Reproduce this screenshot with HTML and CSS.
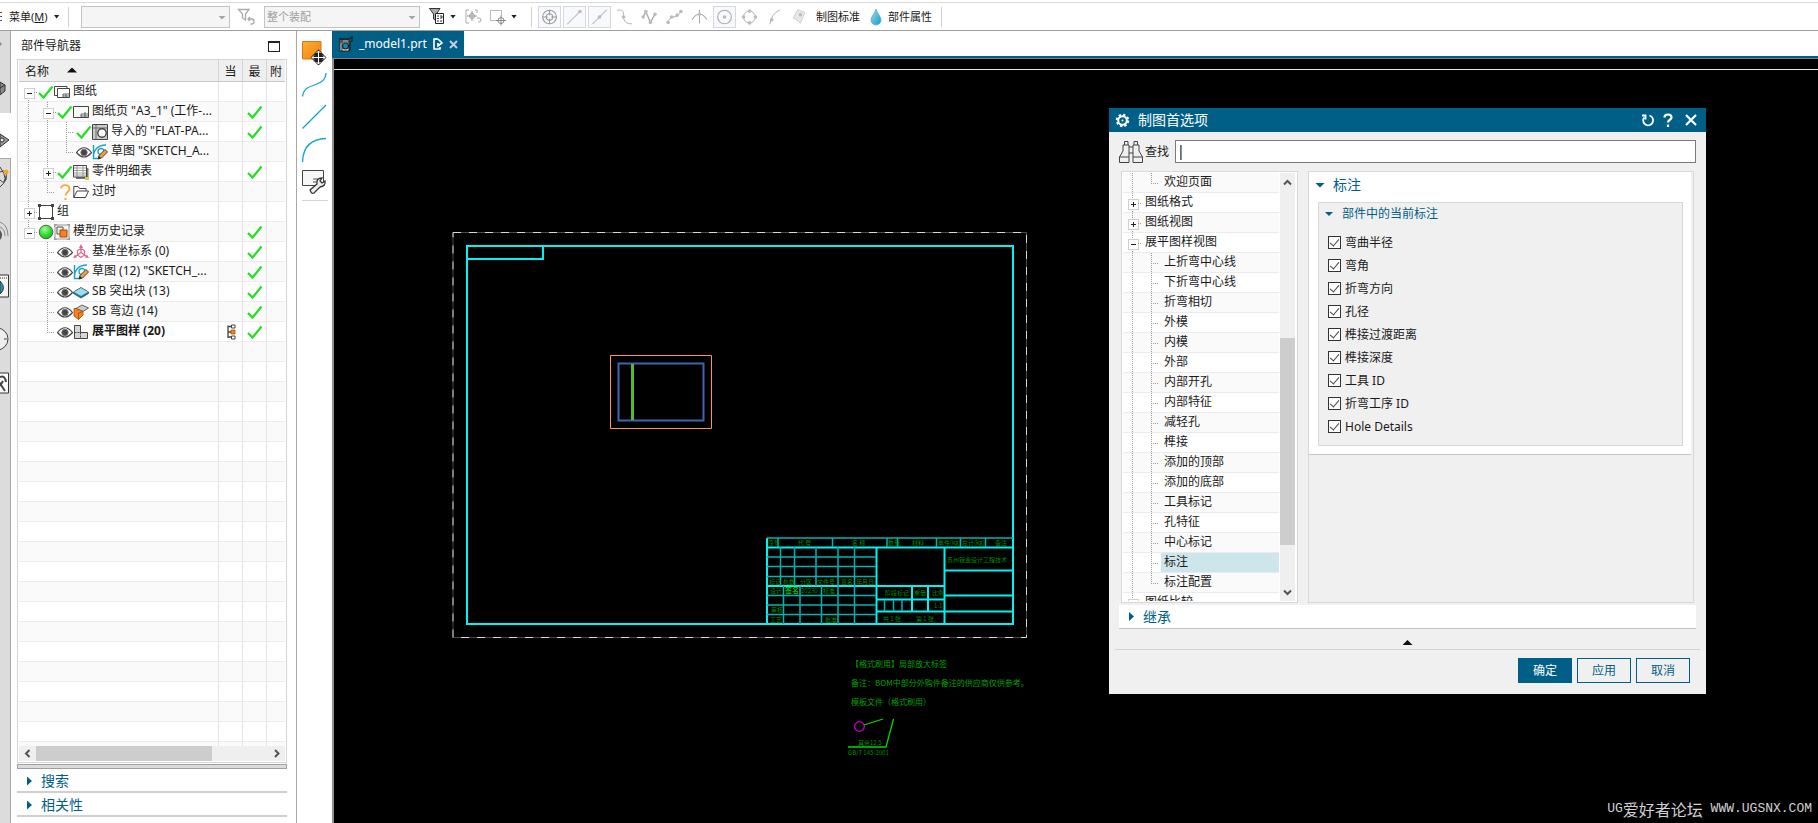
FILE: index.html
```html
<!DOCTYPE html>
<html lang="zh-CN">
<head>
<meta charset="utf-8">
<title>_model1.prt</title>
<link rel="stylesheet" href="styles.css">
</head>
<body>
<svg class="defs" aria-hidden="true">
  <defs>
    <linearGradient id="g-orange" x1="0" y1="0" x2="1" y2="1"><stop offset="0" stop-color="#fbb034"/><stop offset="1" stop-color="#f08010"/></linearGradient>
    <linearGradient id="g-drop" x1="0" y1="0" x2="1" y2="1"><stop offset="0" stop-color="#a6dcec"/><stop offset="1" stop-color="#0d9cc4"/></linearGradient>
    <radialGradient id="g-ball" cx=".4" cy=".3" r=".7"><stop offset="0" stop-color="#a8f5a0"/><stop offset=".6" stop-color="#2fe02f"/><stop offset="1" stop-color="#1fb81f"/></radialGradient>
  </defs>
  <symbol id="check" viewBox="0 0 16 16"><path d="M1 9 5.500 13.500 14.500 2.500" fill="none" stroke="#22e022" stroke-width="2.200"/></symbol>
  <symbol id="eye" viewBox="0 0 16 16"><path d="M.5 8.500Q8-1 15.500 8.500Q8 17.500 .5 8.500Z" fill="#fff" stroke="#444" stroke-width="1.200"/><circle cx="8" cy="8.500" r="3.200" fill="#444" stroke="#777"/></symbol>
  <symbol id="sheets" viewBox="0 0 16 16"><path d="M3 11.500H.5V2.500H13V4" fill="none" stroke="#444"/><path d="M3.500 4.500H15.500V13.500H3.500Z" fill="#fff" stroke="#444"/><path d="M9 13V10H15M9 12H15M12 10V13" fill="none" stroke="#444" stroke-width=".8"/></symbol>
  <symbol id="sheet" viewBox="0 0 16 16"><path d="M.5 2.500H15.500V13.500H.5Z" fill="#f8f8f8" stroke="#444"/><path d="M8 13V10H15M8 12H15M12 8V13" fill="none" stroke="#444" stroke-width=".8"/></symbol>
  <symbol id="import" viewBox="0 0 16 16"><path d="M.5.5H15.500V15.500H.5Z" fill="#ccc" stroke="#444"/><path d="M4 1V15M1 4H15" stroke="#666"/><circle cx="10" cy="9" r="4.200" fill="#fff" stroke="#444" stroke-width="1.400"/></symbol>
  <symbol id="sketch" viewBox="0 0 16 16"><path d="M1.500 1V14.500H6M1.500 14C1 6 6 1 14 1M6 8a3 3 0 1 0 6-1A3 3 0 0 0 6 8" fill="none" stroke="#18a0cc" stroke-width="1.400"/><path d="M6 15 7 11.500 13 5.500 15.500 8 9.500 14Z" fill="#f3a03c" stroke="#333" stroke-width=".9"/><path d="M6 15 7 12 9 14Z" fill="#222"/></symbol>
  <symbol id="list" viewBox="0 0 16 16"><path d="M3 4H15.500V15H3Z" fill="#777"/><path d="M.5 1.500H13.500V13H.5Z" fill="#fff" stroke="#444"/><path d="M1 4H13M1 6.500H13M1 9H13M1 11H13M4 2V13M10 2V13" stroke="#888" stroke-width=".8"/><path d="M12 13H16V16H12Z" fill="#d8c64a"/></symbol>
  <symbol id="quest" viewBox="0 0 16 16"><path d="M4 4.500C4 0 12.500 0 12.500 5C12.500 8 8.500 8 8.500 11.500" fill="none" stroke="#f9a83d" stroke-width="1.800"/><path d="M7.500 14H9.500V16H7.500Z" fill="#f9a83d"/></symbol>
  <symbol id="folder" viewBox="0 0 16 16"><path d="M.8 13.500V2.500H5L6.500 4.500H13V7M.8 13.500 4 7H15.500L12.500 13.500Z" fill="#fff" stroke="#444"/></symbol>
  <symbol id="group" viewBox="0 0 16 16"><path d="M1.500 1.500H14.500V14.500H1.500Z" fill="none" stroke="#444"/><path d="M0 0H3V3H0ZM13 0H16V3H13ZM0 13H3V16H0ZM13 13H16V16H13Z" fill="#444"/></symbol>
  <symbol id="ball" viewBox="0 0 16 16"><circle cx="8" cy="8" r="6.800" fill="url(#g-ball)" stroke="#444" stroke-width=".8"/></symbol>
  <symbol id="history" viewBox="0 0 16 16"><path d="M1 1H15V15H1Z" fill="#f4f4f4" stroke="#999"/><path d="M0 3V0H3M13 0H16V3M0 13V16H3M13 16H16V13" fill="none" stroke="#777"/><path d="M3 3H9V10H3Z" fill="#eee" stroke="#555"/><path d="M6 6H13V13H6Z" fill="#f58220" stroke="#a34b00"/></symbol>
  <symbol id="csys" viewBox="0 0 16 16"><path d="M8 2V8.500L2.500 12.500M8 8.500 13.500 12.500M4.500 6.500V11L8 13.500 11.500 11V6.500L8 4.500Z" fill="none" stroke="#d86a92" stroke-width="1.200"/><path d="M8 0 10 4H6ZM0 14 2 10.500 4 13.500ZM16 14 14 10.500 12 13.500Z" fill="#d86a92"/></symbol>
  <symbol id="tab3d" viewBox="0 0 16 16"><path d="M.5 8 8 3.500 15.500 8V9.500L8 14 .5 9.500Z" fill="#0b7fa5" stroke="#444" stroke-width=".8"/><path d="M1 8 8 4 15 8 8 12Z" fill="#9fdcec"/></symbol>
  <symbol id="flange" viewBox="0 0 16 16"><path d="M3 4.500 9 1 15.500 4 10 7.500Z" fill="#ccc" stroke="#444" stroke-width=".8"/><path d="M1 4.500 3 4.500 10 7.500V11L5.500 15.500 1 12Z" fill="#f58220" stroke="#a34b00" stroke-width=".8"/><path d="M5.500 15.500V9L10 7.500" fill="none" stroke="#a34b00" stroke-width=".8"/></symbol>
  <symbol id="flat" viewBox="0 0 16 16"><path d="M1.500 1.500H7.500V8.500H14.500V14.500H1.500Z" fill="#d6d6d6" stroke="#444"/><path d="M7.500 8.500V14.500M1.500 8.500H7.500" stroke="#444" stroke-dasharray="2 1"/></symbol>
  <symbol id="link" viewBox="0 0 10 16"><path d="M2 1.500V14M2 2.500H5M2 8H5M2 13H5" fill="none" stroke="#444" stroke-width="1.300"/><path d="M5.500 1H9V4H5.500ZM5.500 12H9V15H5.500Z" fill="#fff" stroke="#444"/><path d="M5 6H9V10H5Z" fill="#f58220" stroke="#a34b00" stroke-width=".7"/></symbol>
</svg>

<header class="menubar">
  <button class="menu-btn"><svg width="3" height="12" viewBox="0 0 3 12"><path d="M0 1.500H2M0 5.500H2M0 9.500H2" stroke="#555"/></svg><span>菜单(<u>M</u>)</span><i class="caret"></i></button>
  <i class="sep"></i>
  <span class="combo combo-a"><select disabled aria-label="类型过滤器"><option></option></select><i class="caret dim"></i></span>
  <button class="tool" aria-label="重置过滤器"><svg width="20" height="20" viewBox="0 0 20 20"><path d="M1.500 2.500H12L8.500 7V13L5.500 11V7ZM11 12H14.500A2.300 2.300 0 0 1 14.500 17H13.500M13 10 11 12 13 14" fill="none" stroke="#aaa" stroke-width="1.300"/></svg></button>
  <span class="combo combo-b"><select disabled aria-label="选择范围"><option>整个装配</option></select><i class="caret dim"></i></span>
  <button class="tool" aria-label="过滤列表"><svg width="20" height="20" viewBox="0 0 20 20"><path d="M2.500 1.500H13L9.500 7V14L6.500 12V7Z" fill="#aaa" stroke="#333"/><path d="M8.500 6.500H16.500V16.500H8.500Z" fill="#fff" stroke="#222"/><path d="M10 9H12M10 11.500H12M10 14H12M13 9H15V11H13M13 14H15" stroke="#333" fill="none"/></svg><i class="caret"></i></button>
  <button class="tool" aria-label="最高选择优先级"><svg width="18" height="18" viewBox="0 0 18 18"><path d="M5 2H2V15H5M11 2H13V5M13 10H15A2 2 0 0 1 15 14H14" fill="none" stroke="#aaa"/><circle cx="8" cy="8" r="2.500" fill="none" stroke="#999"/><path d="M8 3V13M3 8H13" stroke="#999"/></svg></button>
  <button class="tool" aria-label="选择组"><svg width="18" height="18" viewBox="0 0 18 18"><path d="M8 12.500H.5V2.500H11.500V8" fill="none" stroke="#bbb"/><circle cx="11" cy="12.500" r="3" fill="none" stroke="#888"/><path d="M11 7.500V17.500M6 12.500H16" stroke="#888"/></svg><i class="caret"></i></button>
  <i class="sep"></i>
  <span class="snaps">
    <button class="snap on" aria-label="捕捉"><svg viewBox="0 0 22 22"><g fill="none" stroke="#9b9b9b" stroke-width="1.200"><circle cx="11" cy="11" r="7.500"/><circle cx="11" cy="11" r="3.500"/><path d="M11 3V9M11 13V19M3 11H9M13 11H19"/></g></svg></button>
    <button class="snap on" aria-label="端点"><svg viewBox="0 0 22 22"><path d="M3 19 17 5" stroke="#999"/><circle cx="17" cy="5" r="2" fill="#bbb"/></svg></button>
    <button class="snap on" aria-label="中点"><svg viewBox="0 0 22 22"><path d="M3 19 19 3" stroke="#999"/><circle cx="11" cy="11" r="2" fill="#bbb"/></svg></button>
    <button class="snap" aria-label="控制点"><svg viewBox="0 0 22 22"><path d="M3 3.500C9 3 10 4 10 10S13 18.500 19 18.500" fill="none" stroke="#aaa"/><circle cx="10" cy="11" r="2" fill="#bbb"/></svg></button>
    <button class="snap" aria-label="极点"><svg viewBox="0 0 22 22"><path d="M4 11 7 5 12 17 17 8" fill="none" stroke="#aaa" stroke-width="1.500"/><g fill="#bbb"><circle cx="4" cy="11" r="2"/><circle cx="7" cy="5" r="2"/><circle cx="12" cy="17" r="2"/><circle cx="17" cy="8" r="2"/></g></svg></button>
    <button class="snap" aria-label="定义点"><svg viewBox="0 0 22 22"><path d="M4 17Q5 11 10 11T18 5" fill="none" stroke="#aaa"/><g fill="#bbb"><circle cx="4" cy="17" r="2"/><circle cx="8" cy="11" r="2"/><circle cx="14" cy="9" r="2"/><circle cx="18" cy="5" r="2"/></g></svg></button>
    <button class="snap" aria-label="交点"><svg viewBox="0 0 22 22"><path d="M11 3V18M3 14Q6 8 11 8T19 14" fill="none" stroke="#aaa" stroke-width="1.200"/><circle cx="11" cy="8" r="1.800" fill="#bbb"/></svg></button>
    <button class="snap on" aria-label="圆弧中心"><svg viewBox="0 0 22 22"><circle cx="11" cy="11" r="7.500" fill="none" stroke="#aaa" stroke-width="1.200"/><circle cx="11" cy="11" r="2" fill="#bbb"/></svg></button>
    <button class="snap" aria-label="象限点"><svg viewBox="0 0 22 22"><circle cx="11" cy="11" r="6.500" fill="none" stroke="#aaa"/><g fill="#bbb"><circle cx="11" cy="4.500" r="2"/><circle cx="11" cy="17.500" r="2"/><circle cx="4.500" cy="11" r="2"/><circle cx="17.500" cy="11" r="2"/></g></svg></button>
    <button class="snap" aria-label="曲线上的点"><svg viewBox="0 0 22 22"><path d="M6 19Q7 8 17 3" fill="none" stroke="#aaa"/><circle cx="8" cy="14" r="2" fill="#bbb"/></svg></button>
    <button class="snap" aria-label="面上的点"><svg viewBox="0 0 22 22"><path d="M4 12 9 3 17 6 12 18Q9 14 4 12Z" fill="#e8e8e8" stroke="#ccc"/><circle cx="12" cy="8.500" r="2" fill="#bbb"/></svg></button>
  </span>
  <button class="text-btn">制图标准</button>
  <button class="text-btn"><svg width="12" height="18" viewBox="0 0 12 18"><path d="M6 1C7 5 11 8.500 11 12A5 5 0 0 1 1 12C1 8.500 5 5 6 1Z" fill="url(#g-drop)" stroke="#4aa8c4" stroke-width=".7"/></svg>部件属性</button>
  <i class="sep"></i>
</header>

<main class="work">
  <nav class="resource" aria-label="资源条">
    <button class="r1"><svg viewBox="0 31 10 82" height="82"><path d="M0 42 2 44 0 46Z" fill="#888"/><path d="M0 82 5 85V91L0 95Z" fill="#888" stroke="#333"/><path d="M0 88 5 85" stroke="#333"/></svg></button>
    <button class="r2 active"><svg viewBox="0 113 10 45" height="45"><path d="M0 134 9 140 0 147Z" fill="#999" stroke="#333"/><circle cx="2" cy="140" r="2" fill="#eee" stroke="#333"/></svg></button>
    <button><svg viewBox="0 158 10 44" height="44"><path d="M0 167Q10 180 0 187M0 172Q8 168 6 180M0 180Q6 186 6 176" fill="none" stroke="#444"/><circle cx="6" cy="172" r="2.500" fill="#f5a623"/></svg></button>
    <button><svg viewBox="0 202 10 60" height="60"><path d="M0 222Q8 225 8 236M0 227Q5 229 5 236" fill="none" stroke="#888"/><path d="M0 230Q4 235 0 240Z" fill="#555"/></svg></button>
    <button><svg viewBox="0 262 10 43" height="43"><path d="M-1 275H8.500V297H-1Z" fill="#f4f4f4" stroke="#333"/><path d="M0 278H8" stroke="#333" stroke-dasharray="1 1"/><path d="M0 281Q7 288 0 294Z" fill="#2795b8" stroke="#333"/></svg></button>
    <button><svg viewBox="0 305 10 53" height="53"><circle cx="-3" cy="339" r="11" fill="#eee" stroke="#444"/><path d="M4 339H7" stroke="#444"/></svg></button>
    <button><svg viewBox="0 358 10 52" height="52"><path d="M-1 373H8.500V393H-1Z" fill="#fff" stroke="#333"/><path d="M0 377Q5 375 6 382M-1 382 5 391M0 386 3 381" fill="none" stroke="#444" stroke-width="2"/></svg></button>
  </nav>

  <section class="navigator">
    <h2 class="nav-title">部件导航器<button class="maxi" aria-label="最大化"></button></h2>
    <div class="tree-frame">
      <div class="part-rows">
        <table class="parts">
          <colgroup><col><col class="c24"><col class="c24"><col class="c18"></colgroup>
          <thead><tr><th>名称<i class="sort"></i></th><th>当</th><th>最</th><th>附</th></tr></thead>
          <tbody>
            <tr><td><div class="node"><i class="g b x minus"></i><svg><use href="#check"/></svg><svg><use href="#sheets"/></svg><span>图纸</span></div></td><td></td><td></td><td></td></tr>
            <tr><td><div class="node"><i class="g v"></i><i class="g v x minus"></i><svg><use href="#check"/></svg><svg><use href="#sheet"/></svg><span>图纸页 "A3_1" (工作-...</span></div></td><td></td><td><svg><use href="#check"/></svg></td><td></td></tr>
            <tr><td><div class="node"><i class="g v"></i><i class="g v"></i><i class="g v h"></i><svg><use href="#check"/></svg><svg><use href="#import"/></svg><span>导入的 "FLAT-PA...</span></div></td><td></td><td><svg><use href="#check"/></svg></td><td></td></tr>
            <tr><td><div class="node"><i class="g v"></i><i class="g v"></i><i class="g t h"></i><svg><use href="#eye"/></svg><svg><use href="#sketch"/></svg><span>草图 "SKETCH_A...</span></div></td><td></td><td></td><td></td></tr>
            <tr><td><div class="node"><i class="g v"></i><i class="g v x plus"></i><svg><use href="#check"/></svg><svg><use href="#list"/></svg><span>零件明细表</span></div></td><td></td><td><svg><use href="#check"/></svg></td><td></td></tr>
            <tr><td><div class="node"><i class="g v"></i><i class="g t h"></i><svg><use href="#quest"/></svg><svg><use href="#folder"/></svg><span>过时</span></div></td><td></td><td></td><td></td></tr>
            <tr><td><div class="node"><i class="g v x plus"></i><svg><use href="#group"/></svg><span>组</span></div></td><td></td><td></td><td></td></tr>
            <tr><td><div class="node"><i class="g t x minus"></i><svg><use href="#ball"/></svg><svg><use href="#history"/></svg><span>模型历史记录</span></div></td><td></td><td><svg><use href="#check"/></svg></td><td></td></tr>
            <tr><td><div class="node"><i class="g"></i><i class="g v h"></i><svg><use href="#eye"/></svg><svg><use href="#csys"/></svg><span>基准坐标系 (0)</span></div></td><td></td><td><svg><use href="#check"/></svg></td><td></td></tr>
            <tr><td><div class="node"><i class="g"></i><i class="g v h"></i><svg><use href="#eye"/></svg><svg><use href="#sketch"/></svg><span>草图 (12) "SKETCH_...</span></div></td><td></td><td><svg><use href="#check"/></svg></td><td></td></tr>
            <tr><td><div class="node"><i class="g"></i><i class="g v h"></i><svg><use href="#eye"/></svg><svg><use href="#tab3d"/></svg><span>SB 突出块 (13)</span></div></td><td></td><td><svg><use href="#check"/></svg></td><td></td></tr>
            <tr><td><div class="node"><i class="g"></i><i class="g v h"></i><svg><use href="#eye"/></svg><svg><use href="#flange"/></svg><span>SB 弯边 (14)</span></div></td><td></td><td><svg><use href="#check"/></svg></td><td></td></tr>
            <tr><td><div class="node strong"><i class="g"></i><i class="g t h"></i><svg><use href="#eye"/></svg><svg><use href="#flat"/></svg><span>展平图样 (20)</span></div></td><td><svg><use href="#link"/></svg></td><td><svg><use href="#check"/></svg></td><td></td></tr>
          </tbody>
        </table>
      </div>
      <div class="hscroll">
        <svg width="17" height="15" viewBox="0 0 17 15"><path d="M10.500 4 7 7.500 10.500 11" fill="none" stroke="#555" stroke-width="2"/></svg>
        <div class="track"><div class="thumb"></div></div>
        <svg width="17" height="15" viewBox="0 0 17 15"><path d="M7 4 10.500 7.500 7 11" fill="none" stroke="#555" stroke-width="2"/></svg>
      </div>
    </div>
    <div class="splitter"></div>
    <button class="fold"><i class="tri-r"></i>搜索</button>
    <button class="fold"><i class="tri-r"></i>相关性</button>
  </section>

  <aside class="palette">
    <button aria-label="移动"><svg viewBox="0 0 26 28"><path d="M.5 4.500H19V22H.5Z" fill="url(#g-orange)" stroke="#e0701a"/><path d="M16.500 12.500 24.500 20.500 16.500 28.500 8.500 20.500Z" fill="#222"/><path d="M16.500 14V27M10 20.500H23M14.500 16 16.500 14 18.500 16M14.500 25 16.500 27 18.500 25M12 18.500 10 20.500 12 22.500M21 18.500 23 20.500 21 22.500" fill="none" stroke="#fff"/></svg></button>
    <button aria-label="样条"><svg viewBox="0 0 26 28"><path d="M.5 24.500C2 9 23 17 24 1" fill="none" stroke="#16a3cb" stroke-width="1.300"/></svg></button>
    <button aria-label="直线"><svg viewBox="0 0 26 28"><path d="M.5 24.500 24 1" stroke="#16a3cb" stroke-width="1.300"/></svg></button>
    <button aria-label="圆弧"><svg viewBox="0 0 26 28"><path d="M.5 26C1 10 10 3 24 2.500" fill="none" stroke="#16a3cb" stroke-width="1.300"/></svg></button>
    <button aria-label="编辑图纸页"><svg viewBox="0 0 26 28"><path d="M.5 2.500H21.500V17.500H.5Z" fill="#f7f7f7" stroke="#444"/><path d="M11 11H16M11 14H15" stroke="#555"/><path d="M9 24 8 22 15 16Q14 10 20 10L18 13 20 15 23 13Q24 18 18 19L12 25Q10 26 9 24Z" fill="#eee" stroke="#333" stroke-width="1.300"/></svg></button>
    <hr>
  </aside>

  <section class="view">
    <div class="tabs">
      <button class="tab"><svg width="14" height="16" viewBox="0 0 14 16"><path d="M1 4H10V15H1Z" fill="#e4e4e4" stroke="#222"/><path d="M0 3H10L13 1V5L11 6V14L10 15" fill="none" stroke="#222" stroke-width="1.300"/><path d="M3 4V15M1 6H10" stroke="#222"/><circle cx="6.500" cy="10" r="3" fill="#0a8db5" stroke="#222" stroke-width="1.200"/></svg><span>_model1.prt</span><svg width="10" height="12" viewBox="0 0 10 12"><path d="M5 1H1V11H7V9M3 0V2M5 1 9 5 5 8V5" fill="none" stroke="#fff" stroke-width="1.600"/></svg><svg width="9" height="9" viewBox="0 0 9 9"><path d="M1 1 8 8M8 1 1 8" stroke="#ccd" stroke-width="2"/></svg></button>
    </div>
    <div class="canvas">
      <svg class="drawing" width="760" height="764" viewBox="334 59 760 764">
        <g fill="none" stroke-width="1">
          <path d="M453 232.500H1026.500V637.500H453Z" stroke="#4a4a4a"/>
          <path d="M453 232.500H1026.500V637.500H453Z" stroke="#d8d8d8" stroke-dasharray="8 8"/>
          <path d="M610.500 355.500H711.500V428.500H610.500Z" stroke="#ff9a35"/>
        </g>
        <path d="M618.500 363.500H703.500V420.500H618.500Z" fill="none" stroke="#4264b0" stroke-width="2"/>
        <path d="M632.500 364V420" stroke="#55b83a" stroke-width="3"/>
        <g fill="none" stroke="#00f2f2" stroke-width="2">
          <path d="M467 246H1013V624H467ZM467 259H543V246M767 624V538M767 547.500H1013M767 586H945M876.500 547V624M944.500 547V624M876 599.500H944M876 611.500H1013M944 570.500H1013M944 595.500H1013M912 586V611M928 586V611"/>
        </g>
        <g fill="none" stroke="#00b4b4" stroke-width="1.500">
          <path d="M767 538H1013M778 538V547M832.500 538V547M887 538V547M897.500 538V547M936.500 538V547M960.500 538V547M985.500 538V547M767 557H876M767 566.500H876M767 576.500H876M767 595.500H876M767 605H876M767 614.500H876M780.500 547V586M794.500 547V586M816 547V586M838 547V624M854.500 547V624M783.500 586V624M800 586V624M821.500 586V624M884.500 600V611M893.500 600V611M902 600V611"/>
        </g>
        <g class="cad">
          <text x="768" y="545">序号</text><text x="798" y="545">代 号</text><text x="852" y="545">名 称</text><text x="888" y="545">数量</text><text x="912" y="545">材料</text><text x="938" y="545">单件(kg)</text><text x="962" y="545">总计(kg)</text><text x="995" y="545">备注</text>
          <text x="769" y="584">标记</text><text x="783" y="584">处数</text><text x="800" y="584">分区</text><text x="817" y="584">文件号</text><text x="841" y="584">签名</text><text x="856" y="584">年月日</text>
          <text x="770" y="593">设计</text><text x="785" y="593" class="bright">签名</text><text x="801" y="593">20230</text><text x="823" y="593">标准</text>
          <text x="771" y="612">审核</text><text x="770" y="622">工艺</text><text x="825" y="622">批准</text>
          <text x="885" y="595">阶段标记</text><text x="914" y="595">重量</text><text x="932" y="595">比例</text><text x="934" y="608">1:1</text><text x="883" y="621">共 1 张</text><text x="916" y="621">第 1 张</text>
          <text x="947" y="562">苏州钣金设计工程技术</text>
        </g>
        <g class="note">
          <text x="851" y="667">【格式刷用】局部放大标签</text>
          <text x="851" y="686">备注：BOM中部分外购件备注的供应商仅供参考。</text>
          <text x="851" y="705">模板文件（格式刷用）</text>
        </g>
        <g class="cad"><text x="858" y="745">其余12.5</text><text x="848" y="755">GB/T 145-2001</text></g>
        <circle cx="859.500" cy="726.500" r="4.800" fill="none" stroke="#c800c8" stroke-width="1.300"/>
        <path d="M864 725 883 719M893.500 719 886 747H848" fill="none" stroke="#00d800" stroke-width="1.300"/>
      </svg>
      <p class="mark"><span>UG</span>爱好者论坛<span>&nbsp;WWW.UGSNX.COM</span></p>

      <form class="dialog" aria-label="制图首选项">
        <div class="d-title">
          <svg width="15" height="15" viewBox="0 0 15 15"><circle cx="7.500" cy="7.500" r="5.500" fill="none" stroke="#fff" stroke-width="2.500" stroke-dasharray="2.300 2"/><circle cx="7.500" cy="7.500" r="4.300" fill="none" stroke="#fff" stroke-width="2"/><circle cx="7.500" cy="7.500" r="1" fill="#fff"/></svg>
          <h2>制图首选项</h2>
          <button type="button" aria-label="重置"><svg width="14" height="14" viewBox="0 0 14 14"><path d="M8.500 2.500A5 5 0 1 1 3 4.500M1 2.500H4.500V6.500" fill="none" stroke="#fff" stroke-width="1.800"/></svg></button>
          <button type="button" aria-label="帮助"><svg width="14" height="14" viewBox="0 0 14 14"><path d="M3.500 4.500C3.500.5 10.500.5 10.500 4.500C10.500 7 7 6.500 7 9.500M7 11.500V14" fill="none" stroke="#fff" stroke-width="2.200"/></svg></button>
          <button type="button" class="close" aria-label="关闭"><svg width="12" height="12" viewBox="0 0 12 12"><path d="M1 1 11 11M11 1 1 11" stroke="#fff" stroke-width="2.200"/></svg></button>
        </div>
        <div class="d-body">
          <div class="find">
            <svg width="24" height="22" viewBox="0 0 24 22"><path d="M.5 21.500V16L4 10V4H10V21.500ZM.5 16H10M5.500 4V.5H9V4M14 21.500H23.500V16L20 10V4H14ZM14 16H23.500M15 4V.5H18.500V4M10 6H14M10 12H14" fill="none" stroke="#444"/></svg>
            <label for="find">查找</label><input id="find" type="text" value="|">
          </div>
          <div class="panes">
            <div class="pref-frame">
              <div class="pref">
                <div class="node"><i class="g v"></i><i class="g t h"></i><span>欢迎页面</span></div>
                <div class="node"><i class="g v x plus"></i><span>图纸格式</span></div>
                <div class="node"><i class="g v x plus"></i><span>图纸视图</span></div>
                <div class="node"><i class="g v x minus"></i><span>展平图样视图</span></div>
                <div class="node"><i class="g v"></i><i class="g v h"></i><span>上折弯中心线</span></div>
                <div class="node"><i class="g v"></i><i class="g v h"></i><span>下折弯中心线</span></div>
                <div class="node"><i class="g v"></i><i class="g v h"></i><span>折弯相切</span></div>
                <div class="node"><i class="g v"></i><i class="g v h"></i><span>外模</span></div>
                <div class="node"><i class="g v"></i><i class="g v h"></i><span>内模</span></div>
                <div class="node"><i class="g v"></i><i class="g v h"></i><span>外部</span></div>
                <div class="node"><i class="g v"></i><i class="g v h"></i><span>内部开孔</span></div>
                <div class="node"><i class="g v"></i><i class="g v h"></i><span>内部特征</span></div>
                <div class="node"><i class="g v"></i><i class="g v h"></i><span>减轻孔</span></div>
                <div class="node"><i class="g v"></i><i class="g v h"></i><span>榫接</span></div>
                <div class="node"><i class="g v"></i><i class="g v h"></i><span>添加的顶部</span></div>
                <div class="node"><i class="g v"></i><i class="g v h"></i><span>添加的底部</span></div>
                <div class="node"><i class="g v"></i><i class="g v h"></i><span>工具标记</span></div>
                <div class="node"><i class="g v"></i><i class="g v h"></i><span>孔特征</span></div>
                <div class="node"><i class="g v"></i><i class="g v h"></i><span>中心标记</span></div>
                <div class="node"><i class="g v"></i><i class="g v h"></i><span class="sel">标注</span></div>
                <div class="node"><i class="g v"></i><i class="g t h"></i><span>标注配置</span></div>
                <div class="node"><i class="g v x plus"></i><span>图纸比较</span></div>
              </div>
              <div class="vscroll">
                <svg width="15" height="18" viewBox="0 0 15 18"><path d="M4 11.500 7.500 8 11 11.500" fill="none" stroke="#555" stroke-width="2"/></svg>
                <div class="vtrack"><div class="vthumb"></div></div>
                <svg width="15" height="18" viewBox="0 0 15 18"><path d="M4 7.500 7.500 11 11 7.500" fill="none" stroke="#555" stroke-width="2"/></svg>
              </div>
            </div>
            <div class="options">
              <div class="opt-card">
                <h3><i class="tri-d"></i>标注</h3>
                <fieldset>
                  <legend><i class="tri-d small"></i>部件中的当前标注</legend>
                  <label><input type="checkbox" checked>弯曲半径</label>
                  <label><input type="checkbox" checked>弯角</label>
                  <label><input type="checkbox" checked>折弯方向</label>
                  <label><input type="checkbox" checked>孔径</label>
                  <label><input type="checkbox" checked>榫接过渡距离</label>
                  <label><input type="checkbox" checked>榫接深度</label>
                  <label><input type="checkbox" checked>工具 ID</label>
                  <label><input type="checkbox" checked>折弯工序 ID</label>
                  <label><input type="checkbox" checked>Hole Details</label>
                </fieldset>
              </div>
            </div>
          </div>
          <button type="button" class="inherit"><i class="tri-r"></i>继承</button>
          <div class="collapse"><i class="tri-u"></i></div>
          <div class="actions"><button type="button" class="primary">确定</button><button type="button">应用</button><button type="button">取消</button></div>
        </div>
      </form>
    </div>
  </section>
</main>
</body>
</html>
```
FILE: styles.css
```css
* { box-sizing: border-box; }
html, body { margin: 0; height: 100%; }
body {
  display: flex; flex-direction: column; overflow: hidden; background: #fff; color: #1a1a1a;
  font: 12px/16px "Noto Sans", "Noto Sans CJK SC", sans-serif;
}
button { padding: 0; border: 0; background: none; font: inherit; color: inherit; }
h2, h3, p { margin: 0; font-size: 12px; font-weight: 400; }
svg { display: block; flex: none; }
i { display: block; flex: none; font-style: normal; }
.defs { position: absolute; width: 0; height: 0; }

/* menu bar */
.menubar { display: flex; align-items: center; flex: none; height: 31px; padding: 4px 0 1px; border-bottom: 1px solid #a0a0a0; background: linear-gradient(#d9d9d9, #d9d9d9) 0 2px / 100% 1px no-repeat #fff; font-size: 11px; }
.caret { width: 6px; height: 4px; background: #222; clip-path: polygon(0 0, 100% 0, 50% 100%); }
.caret.dim { width: 8px; background: #a5a5a5; }
.menu-btn { display: flex; align-items: center; gap: 6px; width: 68px; }
.menubar .sep { width: 1px; height: 20px; background: #d0d0d0; }
.combo { position: relative; display: flex; height: 22px; }
.combo select { width: 100%; height: 22px; padding: 0 2px; border: 1px solid #c3c3c3; border-radius: 0; background: #f5f5f5; color: #a0a0a0; opacity: 1; font: inherit; appearance: none; }
.combo .caret { position: absolute; right: 4px; top: 10px; }
.combo-a { width: 149px; margin: 0 7px 0 12px; }
.combo-b { width: 156px; margin: 0 7px; }
.tool { display: flex; align-items: center; gap: 3px; margin-right: 8px; }
.combo-a + .tool { margin-right: 0; }
.tool + .sep { margin: 0 6px; }
.snaps { display: flex; gap: 2px; }
.snap { width: 23px; height: 22px; border: 1px solid transparent; }
.snap svg { width: 21px; height: 20px; }
.snap.on { border-color: #d6d8dc; background: #f8f9fd; }
.text-btn { display: flex; align-items: center; gap: 6px; margin: 0 9px 0 5px; }
.text-btn + .text-btn { margin-left: 1px; }

/* frame columns */
.work { display: flex; flex: 1; min-height: 0; }
.resource { display: flex; flex-direction: column; width: 11px; border-right: 1px solid #a8a8a8; background: #dcdcdc; }
.resource svg { width: 10px; }
.resource .r1 { border-bottom: 1px solid #a8a8a8; margin-bottom: -1px; }
.resource .active { width: 11px; background: #fff; border-bottom: 1px solid #a8a8a8; margin-bottom: -1px; }

.navigator { display: flex; flex-direction: column; width: 286px; padding: 0 9px 6px 6px; border-right: 1px solid #a8a8a8; }
.nav-title { display: flex; align-items: center; justify-content: space-between; height: 28px; padding: 2px 7px 0 4px; }
.maxi { width: 12px; height: 11px; border: 1px solid #222; border-top-width: 2px; }
.tree-frame { display: flex; flex-direction: column; flex: 1; min-height: 0; padding: 0 1px 1px; border: 1px solid #d4d4d4; }
.part-rows { flex: 1; min-height: 0; overflow: hidden; background:
  linear-gradient(#e4e4e4, #e4e4e4) right 66px top / 1px 100% no-repeat,
  linear-gradient(#e4e4e4, #e4e4e4) right 42px top / 1px 100% no-repeat,
  linear-gradient(#e4e4e4, #e4e4e4) right 18px top / 1px 100% no-repeat,
  repeating-linear-gradient(#fff 0 19px, #ebebeb 19px 20px, #fafafa 20px 39px, #ebebeb 39px 40px) 0 22px; }
.parts { width: 100%; border-collapse: separate; border-spacing: 0; table-layout: fixed; }
.c24 { width: 24px; }
.c18 { width: 18px; }
.parts th { height: 22px; padding: 2px 0 0; border-right: 1px solid #d4d4d4; border-bottom: 1px solid #c8c8c8; background: #efefef; font-weight: 400; overflow: hidden; white-space: nowrap; }
.parts th:first-child { text-align: left; padding-left: 6px; }
.parts th:last-child { border-right: 0; }
.sort { display: inline-block; width: 10px; height: 5px; margin: 0 0 3px 18px; background: #111; clip-path: polygon(50% 0, 100% 100%, 0 100%); }
.parts td { height: 20px; padding: 0; }
.parts td > svg { width: 16px; height: 16px; margin: 0 auto; }

.node { display: flex; align-items: center; height: 20px; white-space: nowrap; }
.node svg { width: 16px; height: 16px; }
.node span { flex: 1; padding: 0 0 2px 3px; }
.strong { font-weight: 700; }
.g { position: relative; width: 19px; height: 20px; --v: repeating-linear-gradient(#9a9a9a 0 1px, transparent 1px 2px); --h: repeating-linear-gradient(90deg, #9a9a9a 0 1px, transparent 1px 2px); }
.g.v { background: var(--v) 9px 0 / 1px 100% no-repeat; }
.g.t { background: var(--v) 9px 0 / 1px 10px no-repeat; }
.g.b { background: var(--v) 9px 10px / 1px 10px no-repeat; }
.g.v.h { background: var(--v) 9px 0 / 1px 100% no-repeat, var(--h) 9px 10px / 8px 1px no-repeat; }
.g.t.h { background: var(--v) 9px 0 / 1px 10px no-repeat, var(--h) 9px 10px / 8px 1px no-repeat; }
.x::before { content: ""; position: absolute; left: 5px; top: 6px; width: 9px; height: 9px; border: 1px solid #d0d0d0; background: linear-gradient(#222, #222) center / 5px 1px no-repeat #fff; }
.x.plus::before { background: linear-gradient(#222, #222) center / 5px 1px no-repeat, linear-gradient(#222, #222) center / 1px 5px no-repeat #fff; }
.x::after { content: ""; position: absolute; left: 15px; top: 10px; width: 3px; height: 1px; background: var(--h); }

.hscroll { display: flex; height: 15px; background: #efefef; }
.track { flex: 1; }
.thumb { width: 76%; height: 15px; background: #cdcdcd; }
.splitter { height: 5px; margin-top: 1px; border: 1px solid #a0a0a0; background: #dcdcdc; }
.fold { display: flex; align-items: center; height: 24px; padding: 2px 0 0 10px; gap: 9px; border-bottom: 2px solid #d0d0d0; color: #005f87; font-size: 14px; }
.tri-r { width: 5px; height: 9px; background: #005f87; clip-path: polygon(0 0, 100% 50%, 0 100%); }
.tri-d { width: 10px; height: 5px; background: #005f87; clip-path: polygon(0 0, 100% 0, 50% 100%); }
.tri-d.small { width: 8px; height: 4px; }
.tri-u { width: 10px; height: 5px; background: #111; clip-path: polygon(50% 0, 100% 100%, 0 100%); }

.palette { display: flex; flex-direction: column; gap: 4px; width: 35px; padding: 6px 4px 0 5px; }
.palette svg { width: 26px; height: 28px; }
.palette button:first-child { margin-bottom: 3px; }
.palette hr { width: 26px; margin: 0; border: 0; border-top: 1px solid #d4d4d4; }

/* drawing window */
.view { display: flex; flex-direction: column; flex: 1; min-width: 0; }
.tabs { display: flex; height: 27px; border-bottom: 2px solid #005f87; box-shadow: 0 1px #808080; z-index: 1; }
.tab { display: flex; align-items: center; height: 26px; padding: 0 6px 0 7px; gap: 6px; background: #005f87; color: #fff; font-size: 12px; }
.canvas { position: relative; flex: 1; overflow: hidden; padding-top: 1px; border-left: 2px solid #909090; background: linear-gradient(#e8e8e8, #e8e8e8) 0 11px / 100% 1px no-repeat #000; }
.drawing { display: block; }
.cad { fill: #008c00; font: 6px "Noto Sans CJK SC", sans-serif; }
.cad .bright { fill: #00ff00; font-size: 7px; }
.note { fill: #00a000; font: 8px "Noto Sans CJK SC", sans-serif; }
.mark { position: absolute; right: 6px; bottom: 4px; display: flex; align-items: center; color: #d0d0d0; font: 16px/20px "Noto Sans CJK SC", sans-serif; }
.mark span { font: 13px/20px "Liberation Mono", monospace; }

/* preferences dialog */
.dialog { position: absolute; right: 112px; top: 50px; width: 597px; background: #f0f0f0; }
.d-title { display: flex; align-items: center; height: 24px; padding: 0 9px 0 6px; background: #005f87; color: #fff; gap: 6px; }
.d-title h2 { flex: 1; padding-left: 2px; font-size: 14px; }
.d-title .close { margin-left: 4px; }
.d-body { padding: 8px 10px 11px; }
.find { display: flex; align-items: center; gap: 2px; height: 23px; margin-bottom: 8px; }
.find input { flex: 1; height: 23px; margin-left: 4px; padding: 0 1px 2px; border: 1px solid #7a7a7a; background: #fff; font: 14px/20px "Noto Sans", sans-serif; outline: 0; }
.panes { display: flex; gap: 10px; padding: 0 2px; }
.pref-frame { display: flex; width: 177px; height: 432px; padding: 1px; border: 1px solid #d8d8d8; background: #fff; }
.pref { flex: 1; overflow: hidden; background: repeating-linear-gradient(#fafafa 0 19px, #ebebeb 19px 20px, #fff 20px 39px, #ebebeb 39px 40px); }
.pref .sel { height: 20px; padding-top: 1px; background: linear-gradient(#cde6eb, #cde6eb) 0 0 / 100% 19px no-repeat; }
.vscroll { display: flex; flex-direction: column; width: 15px; margin: 0 1px; background: #efefef; }
.vtrack { flex: 1; padding-top: 147px; }
.vthumb { height: 207px; background: #cdcdcd; }
.options { flex: 1; border: 1px solid #d8d8d8; }
.opt-card { margin-right: 2px; padding: 0 8px 8px 9px; border-bottom: 1px solid #c4c4c4; background: #fff; }
.opt-card h3 { display: flex; align-items: center; gap: 8px; height: 30px; margin-left: -3px; padding-bottom: 4px; color: #005f87; font-size: 14px; }
fieldset { display: flex; flex-direction: column; min-width: 0; margin: 0; padding: 0 9px 7px; border: 1px solid #d8d8d8; background: #f0f0f0; }
legend { float: left; display: flex; align-items: center; gap: 9px; width: 100%; height: 28px; padding: 0 0 6px; margin-left: -3px; color: #005f87; }
fieldset label { display: flex; align-items: center; height: 23px; gap: 4px; }
fieldset input { appearance: none; position: relative; width: 13px; height: 13px; margin: 0; border: 1px solid #333; background: #fff; }
fieldset input:checked::after { content: ""; position: absolute; left: 3px; top: 0; width: 4px; height: 8px; border: solid #444; border-width: 0 1px 1px 0; transform: rotate(40deg); }
.inherit { display: flex; align-items: center; gap: 9px; width: 100%; height: 24px; margin-top: 2px; padding-left: 10px; border-bottom: 1px solid #c4c4c4; background: #fff; color: #005f87; font-size: 14px; }
.collapse { display: flex; justify-content: center; margin: 0 -4px; padding: 11px 0 4px; border-bottom: 1px solid #d4d4d4; }
.actions { display: flex; justify-content: flex-end; gap: 5px; padding: 8px 6px 0 0; }
.actions button { width: 54px; height: 25px; border: 1px solid #005f87; color: #005f87; }
.actions .primary { background: #005f87; color: #fff; }
```
